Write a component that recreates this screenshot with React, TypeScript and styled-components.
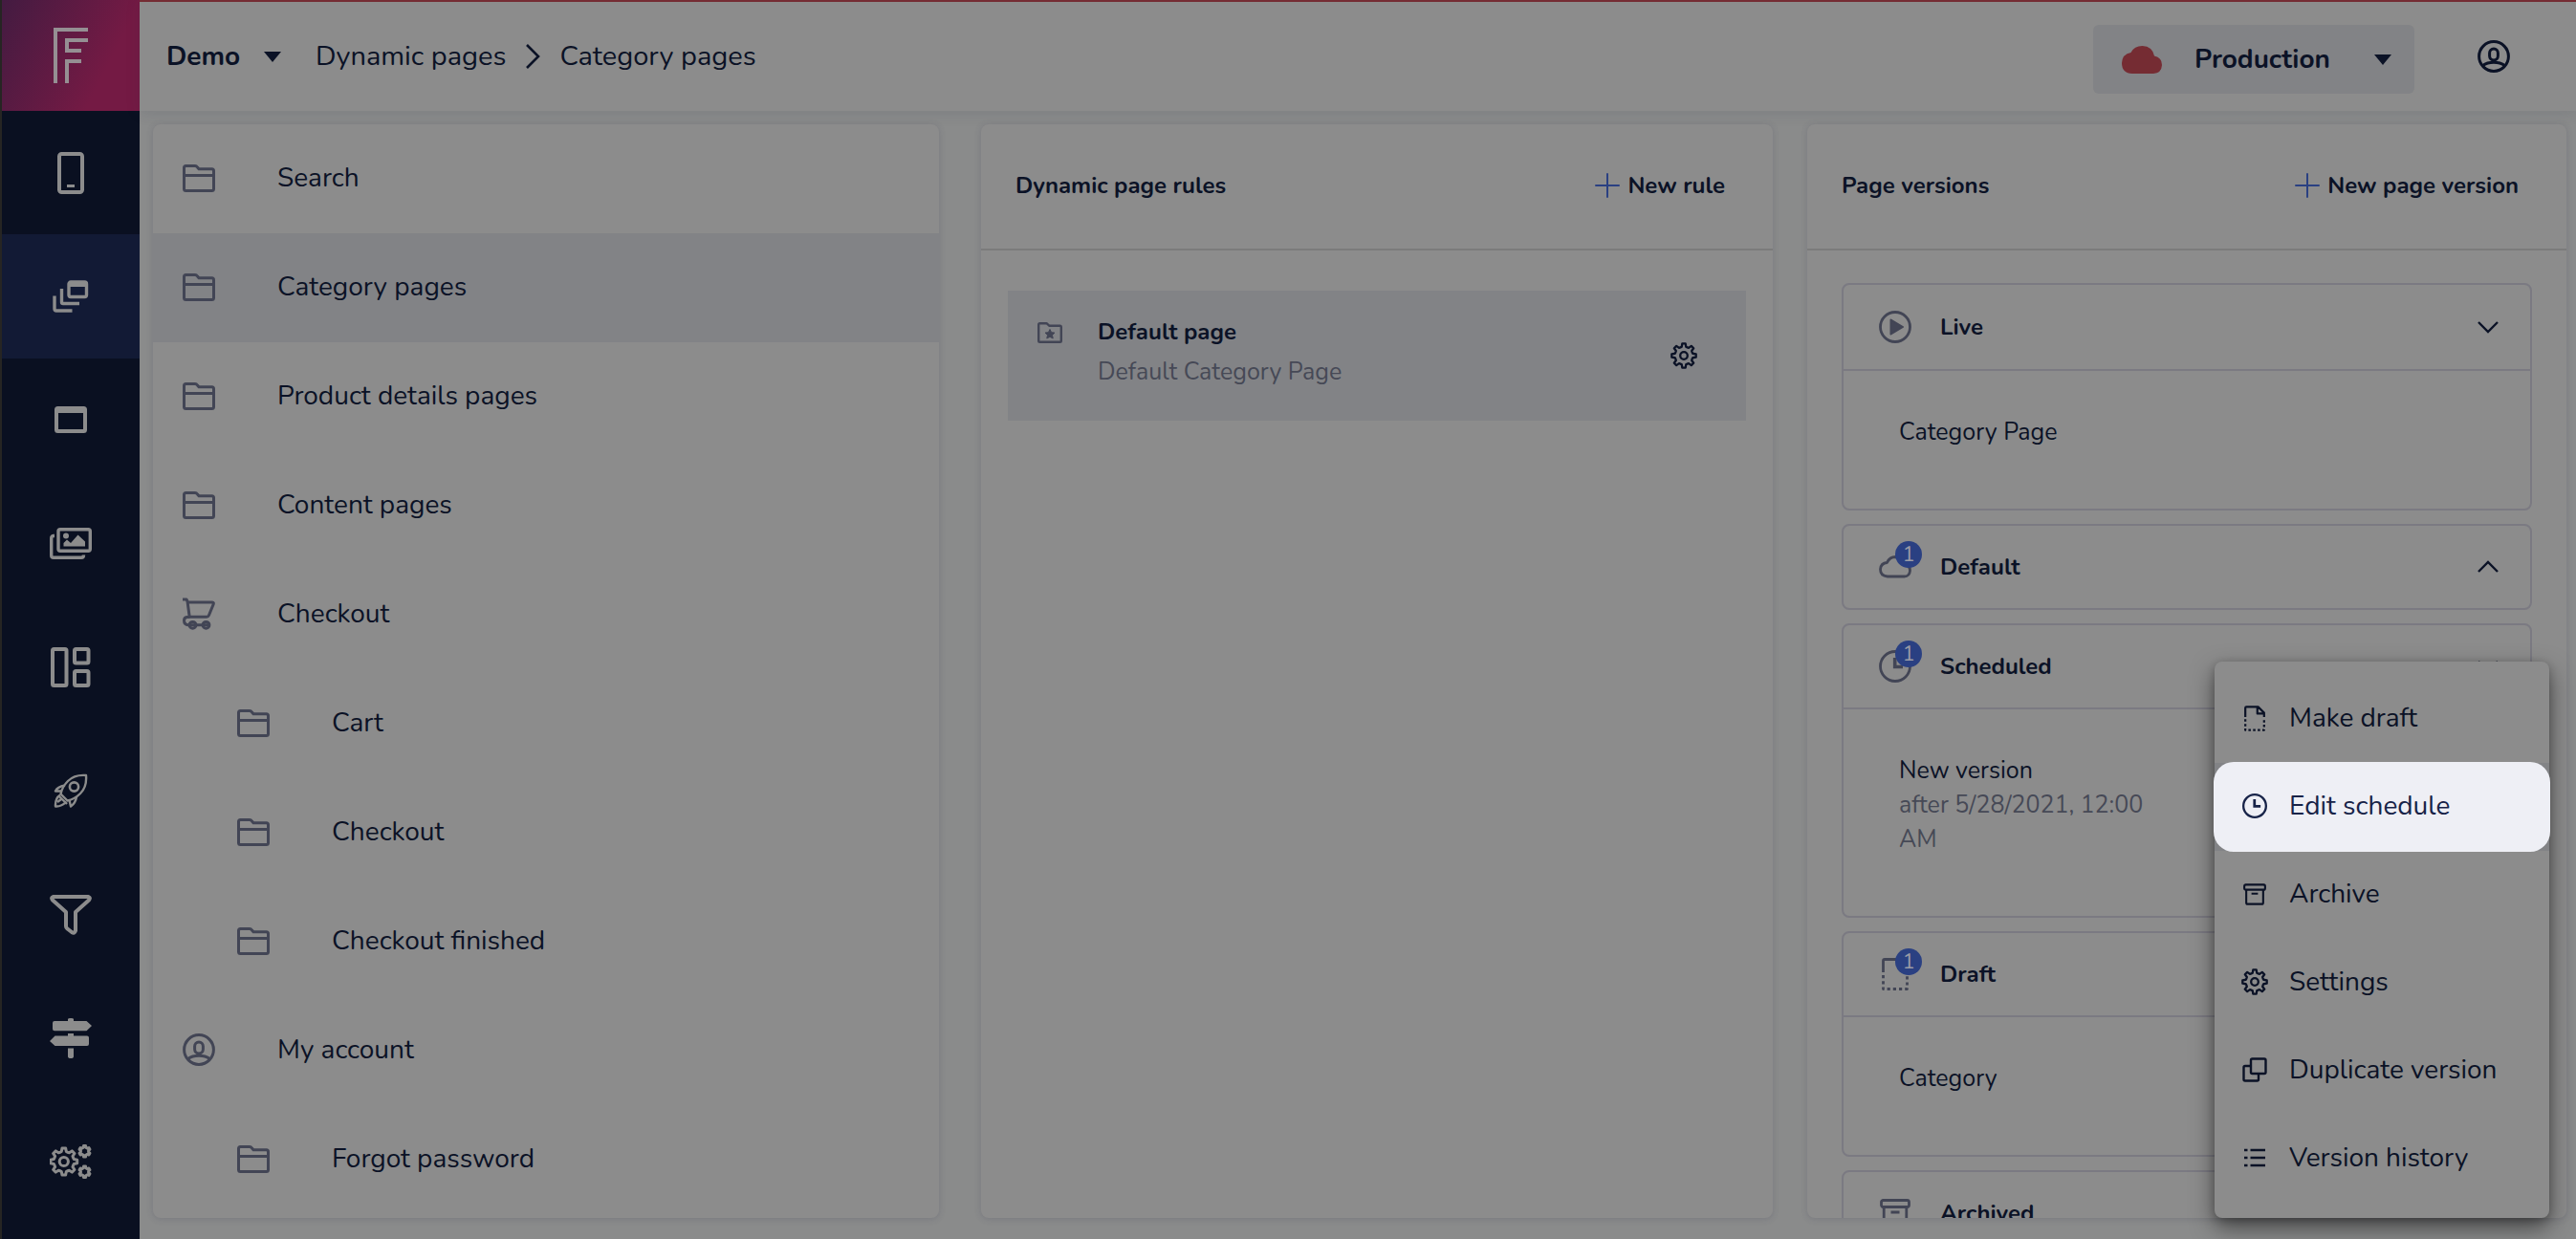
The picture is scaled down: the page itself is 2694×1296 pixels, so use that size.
import React from "react";
import styled, { createGlobalStyle, css } from "styled-components";

const c = {
  ink: "#0b1226",
  muted: "#464956",
  icon: "#424555",
  sidebar: "#0a1021",
  sidebarActive: "#121a35",
  sidebarIcon: "#8c8c8c",
  surface: "#8c8c8c",
  page: "#8a8b8b",
  selected: "#828386",
  line: "#7b7b7b",
  cardLine: "#7b7a82",
  blue: "#2a4082",
  red: "#752c33",
};

const Global = createGlobalStyle`
  *, *::before, *::after { box-sizing: border-box; }
  body { margin: 0; background: ${c.page}; }
  body, button, select {
    font-family: "Nunito", "Open Sans", "Noto Sans", sans-serif;
    color: ${c.ink};
  }
  button, select { margin: 0; padding: 0; border: 0; background: none; font-size: inherit; text-align: left; }
  h2, h3, p, ul { margin: 0; padding: 0; font-size: inherit; font-weight: inherit; }
  ul { list-style: none; }
  a { color: inherit; text-decoration: none; }
  svg { display: block; flex: none; }
`;

/* ---------- layout ---------- */

const Shell = styled.div`
  display: flex;
  height: 100vh;
  overflow: hidden;
  border-left: 2px solid #262523;
  font-size: 28px;
  line-height: 36px;
`;

const Sidebar = styled.nav`
  flex: none;
  width: 144px;
  display: flex;
  flex-direction: column;
  padding-bottom: 16px;
  background: ${c.sidebar};
  color: ${c.sidebarIcon};
`;

const Logo = styled.a`
  flex: none;
  height: 116px;
  display: grid;
  place-items: center;
  background: linear-gradient(117deg, #431b41 0%, #741a44 72%);
`;

const SideLinks = styled.ul`
  flex: 1;
  display: flex;
  flex-direction: column;
`;

const SideItem = styled.li<{ $active?: boolean }>`
  flex: 1;
  display: flex;
  background: ${(p) => (p.$active ? c.sidebarActive : "transparent")};
`;

const SideLink = styled.a`
  flex: 1;
  display: grid;
  place-items: center;
  && { color: ${c.sidebarIcon}; }
`;

const Main = styled.div`
  flex: 1;
  min-width: 0;
  display: flex;
  flex-direction: column;
`;

const TopBar = styled.header`
  flex: none;
  height: 116px;
  display: flex;
  align-items: center;
  padding: 0 69px 0 28px;
  border-top: 2px solid ${c.red};
  background: ${c.surface};
  box-shadow: 0 2px 14px rgba(40, 50, 70, 0.14);
`;

const SelectBox = styled.label`
  display: flex;
  align-items: center;
  gap: 24px;
`;

const Select = styled.select`
  appearance: none;
  font-size: 28px;
  line-height: 36px;
  font-weight: 700;
`;

const Crumbs = styled.nav`
  flex: 1;
  display: flex;
  align-items: center;
  gap: 20px;
  margin-left: 36px;
  font-size: 29px;
`;

const EnvBox = styled(SelectBox)`
  width: 336px;
  height: 72px;
  margin-top: 6px;
  padding: 0 24px 0 30px;
  gap: 34px;
  border-radius: 6px;
  background: ${c.selected};
  svg:last-child { margin-left: auto; }
`;

const UserButton = styled.button`
  margin-left: 66px;
`;

const Columns = styled.main`
  flex: 1;
  min-height: 0;
  display: flex;
  padding: 14px 10px 22px 14px;
`;

const Column = styled.div<{ $grow: number; $gap: number }>`
  position: relative;
  flex: ${(p) => p.$grow} 1 0;
  min-width: 0;
  display: flex;
  margin-right: ${(p) => p.$gap}px;
`;

const Panel = styled.section`
  flex: 1;
  min-width: 0;
  display: flex;
  flex-direction: column;
  overflow: hidden;
  border-radius: 8px;
  background: ${c.surface};
  box-shadow: 0 1px 7px rgba(50, 50, 80, 0.2);
`;

/* ---------- page tree ---------- */

const TreeRow = styled.a<{ $nested?: boolean; $active?: boolean }>`
  height: 114px;
  display: flex;
  align-items: center;
  gap: 65px;
  padding-left: ${(p) => (p.$nested ? 88 : 31)}px;
  padding-bottom: 2px;
  background: ${(p) => (p.$active ? c.selected : "transparent")};
  svg { color: ${c.icon}; }
`;

/* ---------- panels with a heading ---------- */

const PanelHead = styled.header`
  flex: none;
  height: 132px;
  display: flex;
  align-items: center;
  justify-content: space-between;
  padding: 0 50px 3px 36px;
  border-bottom: 2px solid ${c.line};
  font-size: 24px;
  font-weight: 700;
`;

const AddButton = styled.button`
  display: flex;
  align-items: center;
  gap: 8px;
  font-weight: 700;
  svg { color: ${c.blue}; }
`;

const Rule = styled.article`
  display: flex;
  gap: 37px;
  margin: 42px 28px;
  height: 136px;
  padding: 22px 51px 0 31px;
  background: ${c.selected};
  line-height: 42px;
  > svg { color: ${c.icon}; margin-top: 11px; }
`;

const RuleText = styled.div`
  flex: 1;
  h3 { font-size: 24px; font-weight: 700; }
  p { font-size: 25px; color: ${c.muted}; }
`;

const RuleSettings = styled.button`
  align-self: center;
  padding-bottom: 22px;
`;

const Versions = styled.div`
  flex: 1;
  min-height: 0;
  overflow: hidden;
  display: flex;
  flex-direction: column;
  gap: 14px;
  padding: 34px 36px 0;
`;

const Card = styled.article`
  flex: none;
  border: 2px solid ${c.cardLine};
  border-radius: 8px;
`;

const CardHead = styled.button<{ $tall?: boolean }>`
  width: 100%;
  height: ${(p) => (p.$tall ? 88 : 86)}px;
  display: flex;
  align-items: center;
  gap: 29px;
  padding: 0 33px 0 36px;
  font-size: 24px;
  font-weight: 700;
  > span:nth-child(2) { flex: 1; }
`;

const StatusIcon = styled.span`
  position: relative;
  width: 36px;
  height: 34px;
  display: grid;
  place-items: center;
  color: ${c.icon};
`;

const Badge = styled.span`
  position: absolute;
  right: -10px;
  top: -10px;
  width: 28px;
  height: 28px;
  border-radius: 50%;
  background: ${c.blue};
  color: #9a9ca6;
  font-size: 22px;
  font-weight: 400;
  line-height: 28px;
  text-align: center;
`;

const CardBody = styled.div`
  min-height: 146px;
  padding: 46px 380px 62px 58px;
  border-top: 2px solid ${c.cardLine};
  font-size: 25px;
  small { display: block; font-size: 25px; color: ${c.muted}; }
`;

/* ---------- context menu ---------- */

const Menu = styled.ul`
  position: absolute;
  right: 18px;
  bottom: 0;
  width: 350px;
  padding: 14px 0 16px;
  border-radius: 8px;
  background: ${c.surface};
  box-shadow: 0 10px 24px rgba(0, 0, 0, 0.5), 0 2px 8px rgba(0, 0, 0, 0.2);
`;

const MenuItem = styled.li<{ $active?: boolean }>`
  display: flex;
  height: 92px;
  background: ${(p) => (p.$active ? c.selected : "transparent")};
`;

const MenuButton = styled.button<{ $active?: boolean }>`
  flex: 1;
  display: flex;
  align-items: center;
  gap: 22px;
  padding: 0 0 2px 28px;
  ${(p) =>
    p.$active &&
    css`
      position: relative;
      border-radius: 20px;
      background: #eeeff5;
      color: #172348;
      box-shadow: 0 0 0 1px #eeeff5;
    `}
`;

const MenuIcon = styled.span`
  width: 28px;
  display: grid;
  place-items: center;
`;

/* ---------- icons ---------- */

type IconProps = {
  w: number;
  h: number;
  size?: [number, number];
  sw?: number;
  children: React.ReactNode;
};

const Icon = ({ w, h, size, sw = 3, children }: IconProps) => (
  <svg
    width={size ? size[0] : w}
    height={size ? size[1] : h}
    viewBox={`0 0 ${w} ${h}`}
    fill="none"
    stroke="currentColor"
    strokeWidth={sw}
    strokeLinejoin="round"
    aria-hidden="true"
  >
    {children}
  </svg>
);

const gear = (cx: number, cy: number, outer: number, inner: number, teeth: number) => {
  const step = (Math.PI * 2) / teeth;
  const pt = (r: number, a: number) =>
    `${(cx + r * Math.cos(a)).toFixed(2)} ${(cy + r * Math.sin(a)).toFixed(2)}`;
  let d = "";
  for (let i = 0; i < teeth; i++) {
    const a = i * step - Math.PI / 2;
    d += `${i ? "L" : "M"}${pt(outer, a - step * 0.17)} L${pt(outer, a + step * 0.17)} `;
    d += `L${pt(inner, a + step * 0.3)} Q${pt(inner * 0.96, a + step * 0.5)} ${pt(inner, a + step * 0.7)} `;
  }
  return d + "Z";
};

const Caret = () => (
  <Icon w={18} h={11} sw={0}>
    <path d="M0 0H18L9 11Z" fill="currentColor" />
  </Icon>
);
const Plus = () => (
  <Icon w={26} h={26} sw={2}>
    <path d="M13 1V25M1 13H25" strokeLinecap="round" />
  </Icon>
);
const Chevron = ({ up }: { up?: boolean }) => (
  <Icon w={22} h={14} sw={2.4}>
    <path d={up ? "M1 12L11 2L21 12" : "M1 2L11 12L21 2"} strokeLinejoin="miter" />
  </Icon>
);
const Folder = () => (
  <Icon w={34} h={29}>
    <path d="M1.5 3.5Q1.5 1.5 3.5 1.5H13Q14.5 1.5 15.5 3L17 4.7H30.5Q32.5 4.7 32.5 6.7V25.5Q32.5 27.5 30.5 27.5H3.5Q1.5 27.5 1.5 25.5ZM2 11.5H32" />
  </Icon>
);
const Cart = () => (
  <Icon w={34} h={34} sw={3}>
    <path d="M0 2H4L5.5 5H31Q33 5 32 7.5L27.5 18.5Q26.8 20.3 25 20.3H7.2L5 4" />
    <path d="M7.5 20.5H4.5Q1.5 21 1.5 24Q1.5 28.5 6 28.7H27" />
    <circle cx="10.5" cy="28.8" r="3.4" />
    <circle cx="24.5" cy="28.8" r="3.4" />
  </Icon>
);
const User = () => (
  <Icon w={34} h={34} sw={3}>
    <circle cx="17" cy="17" r="15.4" />
    <rect x="12.6" y="9" width="8.8" height="12" rx="4.4" />
    <path d="M5.5 26.5Q10 23.3 17 23.3T28.5 26.5" />
  </Icon>
);
const StarFolder = () => (
  <Icon w={26} h={22} sw={2.4}>
    <path d="M1.2 2.5Q1.2 1.2 2.5 1.2H9.5L12.5 3.8H23.5Q24.8 3.8 24.8 5.2V19.5Q24.8 20.8 23.5 20.8H2.5Q1.2 20.8 1.2 19.5Z" />
    <path
      d="M13 7.500L14.600 10.700L18 11.100L15.500 13.500L16.200 17L13 15.300L9.800 17L10.500 13.500L8 11.100L11.400 10.700Z"
      fill="currentColor"
      strokeWidth="1"
    />
  </Icon>
);
const Gear = () => (
  <Icon w={28} h={28} sw={2.3}>
    <path d={gear(14, 14, 12.8, 9.6, 8)} />
    <circle cx="14" cy="14" r="3.8" />
  </Icon>
);
const Play = () => (
  <Icon w={34} h={34} sw={2.8}>
    <circle cx="17" cy="17" r="15.5" />
    <path d="M12.5 9.5L25 17L12.5 24.5Z" fill="currentColor" strokeWidth="2" />
  </Icon>
);
const CloudOutline = () => (
  <Icon w={34} h={24} sw={2.8}>
    <path d="M9 22Q1.500 21.500 1.500 14.500Q2 8 8.500 7.500Q11 1.500 17.500 1.500Q25.500 2 26.500 9.500Q32.500 10 32.500 16Q32 22 26.500 22Z" />
  </Icon>
);
const CloudSolid = () => (
  <Icon w={42} h={29} sw={0}>
    <path
      d="M11 29Q0 28.500 0 18Q.5 8.500 9.500 7Q13 0 21.500 0Q32 .5 34 10.500Q42 12 42 20Q41.500 28.500 33 29Z"
      fill={c.red}
    />
  </Icon>
);
const Clock = ({ size = 34 }: { size?: number }) => (
  <Icon w={34} h={34} size={[size, size]} sw={size === 34 ? 2.8 : 3}>
    <circle cx="17" cy="17" r="15.5" />
    <path d="M16.700 8V17.500H25" strokeWidth="3.600" strokeLinejoin="miter" />
  </Icon>
);
const Draft = ({ scale = 1 }: { scale?: number }) => (
  <Icon w={28} h={34} size={[Math.round(28 * scale), Math.round(34 * scale)]} sw={2.8}>
    <path d="M1.500 15V3Q1.500 1.500 3 1.500H18.500L26.500 9.500V15M17.500 2V10.500H26" />
    <path d="M1.500 18V32.500H26.500V18" strokeDasharray="3.200 3" />
  </Icon>
);
const Archive = ({ scale = 1 }: { scale?: number }) => (
  <Icon w={32} h={30} size={[Math.round(32 * scale), Math.round(30 * scale)]} sw={2.8}>
    <rect x="1.500" y="1.500" width="29" height="7" rx="2" />
    <path d="M4.200 9V26.500Q4.200 28.500 6.200 28.500H25.800Q27.800 28.500 27.800 26.500V9M11.500 14H20.500" />
  </Icon>
);
const Duplicate = () => (
  <Icon w={26} h={26} sw={2.4}>
    <rect x="9" y="1.500" width="15.500" height="15.500" rx="1.500" />
    <path d="M8.500 9H3Q1.500 9 1.500 10.500V23Q1.500 24.500 3 24.500H15.500Q17 24.500 17 23V17.500" />
  </Icon>
);
const History = () => (
  <Icon w={26} h={22} sw={2.6}>
    <path d="M2 3H5.500M2 11H5.500M2 19H5.500M8.500 3H24M8.500 11H24M8.500 19H24" />
  </Icon>
);

const Phone = () => (
  <Icon w={28} h={44} sw={4}>
    <rect x="2" y="2" width="24" height="40" rx="2.500" />
    <path d="M10 35.500H18" strokeWidth="3" />
  </Icon>
);
const DynamicPages = () => (
  <Icon w={38} h={34} sw={3.4}>
    <rect x="17" y="2" width="18.500" height="15.500" rx="2" />
    <path d="M17 4.500H35.500" strokeWidth="5" />
    <path d="M9.500 9V23Q9.500 24.500 11 24.500H28M2 16.500V30Q2 32 4 32H20.500" />
  </Icon>
);
const Win = () => (
  <Icon w={34} h={28} sw={4}>
    <rect x="2" y="2" width="30" height="24" rx="1.500" />
    <path d="M2 4.500H32" strokeWidth="5" />
  </Icon>
);
const Images = () => (
  <Icon w={44} h={33} sw={3.4}>
    <rect x="9" y="1.700" width="33.300" height="22.500" rx="2" />
    <path d="M5 8.500H4Q1.700 8.500 1.700 11V29Q1.700 31.300 4 31.300H33Q35.500 31.300 35.500 28.500" />
    <circle cx="17" cy="8.500" r="3" fill="currentColor" strokeWidth="0" />
    <path d="M14.500 19.500V16L18 12.500L22 16L29.500 7.500L37 14.500V19.500Z" fill="currentColor" strokeWidth="0" />
  </Icon>
);
const Blocks = () => (
  <Icon w={42} h={42} sw={4}>
    <rect x="2" y="2" width="14.500" height="38" rx="1.500" />
    <rect x="25" y="2" width="14.500" height="14.500" rx="1.500" />
    <rect x="25" y="25" width="14.500" height="15" rx="1.500" />
  </Icon>
);
const Rocket = () => (
  <Icon w={36} h={36} sw={2.4}>
    <path d="M34 2Q22 1 15 8Q9 14 7.500 21.500L14.500 28.500Q22 27 28 21Q35 14 34 2Z" />
    <circle cx="21.500" cy="14" r="4.600" strokeWidth="2.600" />
    <path d="M12 12.500Q4 14 2 18.500L8.500 18.500M24 24.500Q23 31 18 34.500L16.500 28" />
    <path d="M7 22.500Q1.500 26 2 34.500Q8 35 13.500 29.500M5 23L14 32M8 27L4 30" />
  </Icon>
);
const Funnel = () => (
  <Icon w={44} h={42} sw={4}>
    <path d="M3.500 2H40.500Q43 3 41 5.500L27 18V37.500Q26 41 23 39L18.500 35.500Q17 34.500 17 33V18L3 5.500Q1 3 3.500 2Z" />
  </Icon>
);
const Signs = () => (
  <Icon w={44} h={42} sw={0}>
    <path
      d="M19 3V1Q19 0 22 0T25 1V3H38.500L44 8L38.500 13.200H5Q3 13.200 3 11.200V5Q3 3 5 3ZM19 18.500V16H25V18.500H39Q41 18.500 41 20.500V27Q41 29 39 29H5.500L0 24L5.500 18.500ZM19 31.500H25V40Q25 42 22 42T19 40Z"
      fill="currentColor"
    />
  </Icon>
);
const Gears = () => (
  <Icon w={44} h={36} sw={3}>
    <path d={gear(14.8, 18, 14, 10.8, 8)} />
    <circle cx="14.800" cy="18" r="4.600" />
    <path d={gear(36.5, 7.3, 5.8, 4.2, 6)} strokeWidth="3" />
    <path d={gear(36.5, 28.7, 5.8, 4.2, 6)} strokeWidth="3" />
  </Icon>
);
const LogoMark = () => (
  <svg width="36" height="58" viewBox="0 0 36 58" fill="none" stroke="#958f93" strokeWidth="4" aria-hidden="true">
    <path d="M2 58V2H36M36 13H14V24H29M29 35H14V58" />
  </svg>
);

/* ---------- data ---------- */

const sideLinks = [
  { name: "App", icon: <Phone /> },
  { name: "Dynamic pages", icon: <DynamicPages />, active: true },
  { name: "Pages", icon: <Win /> },
  { name: "Media", icon: <Images /> },
  { name: "Blocks", icon: <Blocks /> },
  { name: "Campaigns", icon: <Rocket /> },
  { name: "Filters", icon: <Funnel /> },
  { name: "Redirects", icon: <Signs /> },
  { name: "Configuration", icon: <Gears /> },
];

const tree = [
  { name: "Search", icon: <Folder /> },
  { name: "Category pages", icon: <Folder />, active: true },
  { name: "Product details pages", icon: <Folder /> },
  { name: "Content pages", icon: <Folder /> },
  { name: "Checkout", icon: <Cart /> },
  { name: "Cart", icon: <Folder />, nested: true },
  { name: "Checkout", icon: <Folder />, nested: true },
  { name: "Checkout finished", icon: <Folder />, nested: true },
  { name: "My account", icon: <User /> },
  { name: "Forgot password", icon: <Folder />, nested: true },
];

type Version = {
  name: string;
  icon: React.ReactNode;
  count?: number;
  tall?: boolean;
  open?: boolean;
  page?: string;
  note?: string;
};

const versions: Version[] = [
  { name: "Live", icon: <Play />, tall: true, page: "Category Page" },
  { name: "Default", icon: <CloudOutline />, count: 1, open: true },
  { name: "Scheduled", icon: <Clock />, count: 1, page: "New version", note: "after 5/28/2021, 12:00 AM" },
  { name: "Draft", icon: <Draft />, count: 1, page: "Category" },
  { name: "Archived", icon: <Archive /> },
];

const menu = [
  { name: "Make draft", icon: <Draft scale={0.79} /> },
  { name: "Edit schedule", icon: <Clock size={26} />, active: true },
  { name: "Archive", icon: <Archive scale={0.75} /> },
  { name: "Settings", icon: <Gear /> },
  { name: "Duplicate version", icon: <Duplicate /> },
  { name: "Version history", icon: <History /> },
];

export default function App() {
  return (
    <>
      <Global />
      <Shell>
        <Sidebar aria-label="Main">
          <Logo href="#" aria-label="Home">
            <LogoMark />
          </Logo>
          <SideLinks>
            {sideLinks.map((l) => (
              <SideItem key={l.name} $active={l.active}>
                <SideLink href="#" aria-label={l.name}>
                  {l.icon}
                </SideLink>
              </SideItem>
            ))}
          </SideLinks>
        </Sidebar>

        <Main>
          <TopBar>
            <SelectBox>
              <Select aria-label="Project">
                <option>Demo</option>
              </Select>
              <Caret />
            </SelectBox>
            <Crumbs aria-label="Breadcrumb">
              <a href="#">Dynamic pages</a>
              <Icon w={16} h={28} sw={2.6}>
                <path d="M2 2L14 14L2 26" strokeLinejoin="miter" />
              </Icon>
              <a href="#">Category pages</a>
            </Crumbs>
            <EnvBox>
              <CloudSolid />
              <Select aria-label="Environment">
                <option>Production</option>
              </Select>
              <Caret />
            </EnvBox>
            <UserButton aria-label="Account">
              <User />
            </UserButton>
          </TopBar>

          <Columns>
            <Column $grow={822} $gap={44}>
              <Panel>
                {tree.map((t, i) => (
                  <TreeRow key={i} href="#" $nested={t.nested} $active={t.active}>
                    {t.icon}
                    <span>{t.name}</span>
                  </TreeRow>
                ))}
              </Panel>
            </Column>

            <Column $grow={828} $gap={36}>
              <Panel>
                <PanelHead>
                  <h2>Dynamic page rules</h2>
                  <AddButton>
                    <Plus />
                    New rule
                  </AddButton>
                </PanelHead>
                <Rule>
                  <StarFolder />
                  <RuleText>
                    <h3>Default page</h3>
                    <p>Default Category Page</p>
                  </RuleText>
                  <RuleSettings aria-label="Rule settings">
                    <Gear />
                  </RuleSettings>
                </Rule>
              </Panel>
            </Column>

            <Column $grow={794} $gap={0}>
              <Panel>
                <PanelHead>
                  <h2>Page versions</h2>
                  <AddButton>
                    <Plus />
                    New page version
                  </AddButton>
                </PanelHead>
                <Versions>
                  {versions.map((v) => (
                    <Card key={v.name}>
                      <CardHead $tall={v.tall}>
                        <StatusIcon>
                          {v.icon}
                          {v.count && <Badge>{v.count}</Badge>}
                        </StatusIcon>
                        <span>{v.name}</span>
                        <Chevron up={v.open} />
                      </CardHead>
                      {v.page && (
                        <CardBody>
                          {v.page}
                          {v.note && <small>{v.note}</small>}
                        </CardBody>
                      )}
                    </Card>
                  ))}
                </Versions>
              </Panel>
              <Menu>
                {menu.map((m) => (
                  <MenuItem key={m.name} $active={m.active}>
                    <MenuButton $active={m.active}>
                      <MenuIcon>{m.icon}</MenuIcon>
                      {m.name}
                    </MenuButton>
                  </MenuItem>
                ))}
              </Menu>
            </Column>
          </Columns>
        </Main>
      </Shell>
    </>
  );
}
